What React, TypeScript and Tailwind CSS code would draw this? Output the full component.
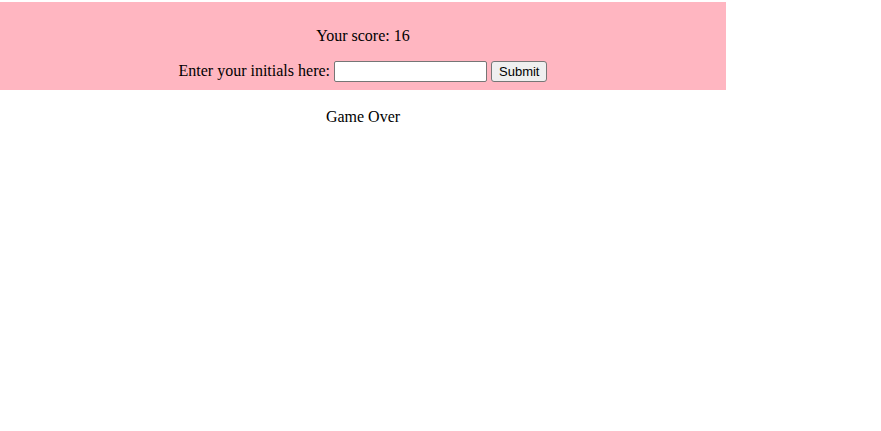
export default function App() {
  return (
    <div className="w-[726px] pt-[2px] font-['Liberation_Serif',serif] text-[16px] text-black">
      <div className="bg-[#ffb6c1] pt-[25px] pb-[8px] text-center">
        <p className="leading-[18px]">Your score: 16</p>
        <div className="mt-[15px] flex items-center justify-center h-[22px]">
          <label className="leading-[18px]">Enter your initials here:</label>
          <input
            type="text"
            className="ml-[4px] w-[153px] h-[21px] bg-white border border-[#767676] rounded-[2px] px-[2px] text-[13px]"
          />
          <button className="ml-[4px] h-[21px] px-[7px] bg-[#efefef] border border-[#767676] rounded-[3px] text-[13px] font-['Liberation_Sans',sans-serif] leading-none">
            Submit
          </button>
        </div>
      </div>
      <p className="mt-[18px] text-center leading-[18px]">Game Over</p>
    </div>
  );
}
